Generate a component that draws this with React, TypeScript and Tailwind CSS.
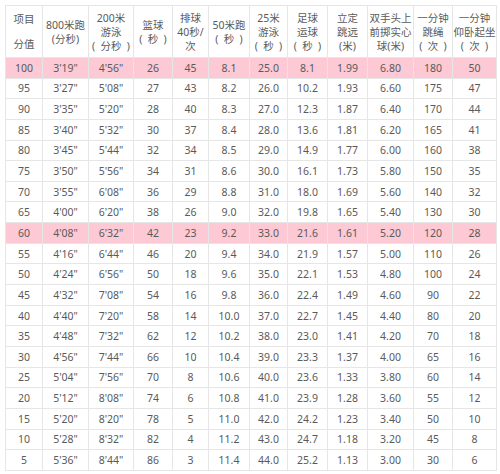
import React from "react";

const widths = [37, 46, 45, 39, 36, 41, 38, 40, 40, 46, 39, 44];

const S = "\u2002";

const headers: string[][] = [
  [],
  ["800米跑", "(分秒)"],
  ["200米", "游泳", `(${S}分秒${S})`],
  ["篮球", `(${S}秒${S})`],
  ["排球", "40秒/", "次"],
  ["50米跑", `(${S}秒${S})`],
  ["25米", "游泳", `(${S}秒${S})`],
  ["足球", "运球", `(${S}秒${S})`],
  ["立定", "跳远", "(米)"],
  ["双手头上", "前掷实心", "球(米)"],
  ["一分钟", "跳绳", `(${S}次${S})`],
  ["一分钟", "仰卧起坐", `(${S}次${S})`],
];

const rows: string[][] = [
  ["100", "3'19\"", "4'56\"", "26", "45", "8.1", "25.0", "8.1", "1.99", "6.80", "180", "50"],
  ["95", "3'27\"", "5'08\"", "27", "43", "8.2", "26.0", "10.2", "1.93", "6.60", "175", "47"],
  ["90", "3'35\"", "5'20\"", "28", "40", "8.3", "27.0", "12.3", "1.87", "6.40", "170", "44"],
  ["85", "3'40\"", "5'32\"", "30", "37", "8.4", "28.0", "13.6", "1.81", "6.20", "165", "41"],
  ["80", "3'45\"", "5'44\"", "32", "34", "8.5", "29.0", "14.9", "1.77", "6.00", "160", "38"],
  ["75", "3'50\"", "5'56\"", "34", "31", "8.6", "30.0", "16.1", "1.73", "5.80", "150", "35"],
  ["70", "3'55\"", "6'08\"", "36", "29", "8.8", "31.0", "18.0", "1.69", "5.60", "140", "32"],
  ["65", "4'00\"", "6'20\"", "38", "26", "9.0", "32.0", "19.8", "1.65", "5.40", "130", "30"],
  ["60", "4'08\"", "6'32\"", "42", "23", "9.2", "33.0", "21.6", "1.61", "5.20", "120", "28"],
  ["55", "4'16\"", "6'44\"", "46", "20", "9.4", "34.0", "21.9", "1.57", "5.00", "110", "26"],
  ["50", "4'24\"", "6'56\"", "50", "18", "9.6", "35.0", "22.1", "1.53", "4.80", "100", "24"],
  ["45", "4'32\"", "7'08\"", "54", "16", "9.8", "36.0", "22.4", "1.49", "4.60", "90", "22"],
  ["40", "4'40\"", "7'20\"", "58", "14", "10.0", "37.0", "22.7", "1.45", "4.40", "80", "20"],
  ["35", "4'48\"", "7'32\"", "62", "12", "10.2", "38.0", "23.0", "1.41", "4.20", "70", "18"],
  ["30", "4'56\"", "7'44\"", "66", "10", "10.4", "39.0", "23.3", "1.37", "4.00", "65", "16"],
  ["25", "5'04\"", "7'56\"", "70", "8", "10.6", "40.0", "23.6", "1.33", "3.80", "60", "14"],
  ["20", "5'12\"", "8'08\"", "74", "6", "10.8", "41.0", "23.9", "1.28", "3.60", "55", "12"],
  ["15", "5'20\"", "8'20\"", "78", "5", "11.0", "42.0", "24.2", "1.23", "3.40", "50", "10"],
  ["10", "5'28\"", "8'32\"", "82", "4", "11.2", "43.0", "24.7", "1.18", "3.20", "45", "8"],
  ["5", "5'36\"", "8'44\"", "86", "3", "11.4", "44.0", "25.2", "1.13", "3.00", "30", "6"],
];

export default function App() {
  return (
    <div
      className="w-[500px] h-[474px] bg-white pl-[5px] pt-[5px] text-[#5a5a5a] text-[10.5px]"
      style={{ fontFamily: '"Noto Sans", "Noto Sans CJK SC", sans-serif' }}
    >
      <table className="border-collapse table-fixed w-[491px]">
        <colgroup>
          {widths.map((w, i) => (
            <col key={i} style={{ width: w }} />
          ))}
        </colgroup>
        <thead>
          <tr className="h-[51px]">
            <th className="border border-[#e6e6e6] font-normal p-0 align-top">
              <div className="flex flex-col items-center justify-between h-[51px] py-[6px] leading-[14px]">
                <span>项目</span>
                <span>分值</span>
              </div>
            </th>
            {headers.slice(1).map((h, i) => (
              <th key={i} className="border border-[#e6e6e6] font-normal p-0 leading-[14px] align-middle">
                {h.map((l, j) => (
                  <div key={j} className="whitespace-pre">
                    {l}
                  </div>
                ))}
              </th>
            ))}
          </tr>
        </thead>
        <tbody>
          {rows.map((r, i) => {
            const pink = r[0] === "100" || r[0] === "60";
            return (
              <tr key={i} className={pink ? "h-[20.65px] bg-[#fdc9d4]" : "h-[20.65px]"}>
                {r.map((c, j) => (
                  <td key={j} className="border border-[#e6e6e6] p-0 text-center leading-[14px] whitespace-nowrap">
                    {c}
                  </td>
                ))}
              </tr>
            );
          })}
        </tbody>
      </table>
    </div>
  );
}
